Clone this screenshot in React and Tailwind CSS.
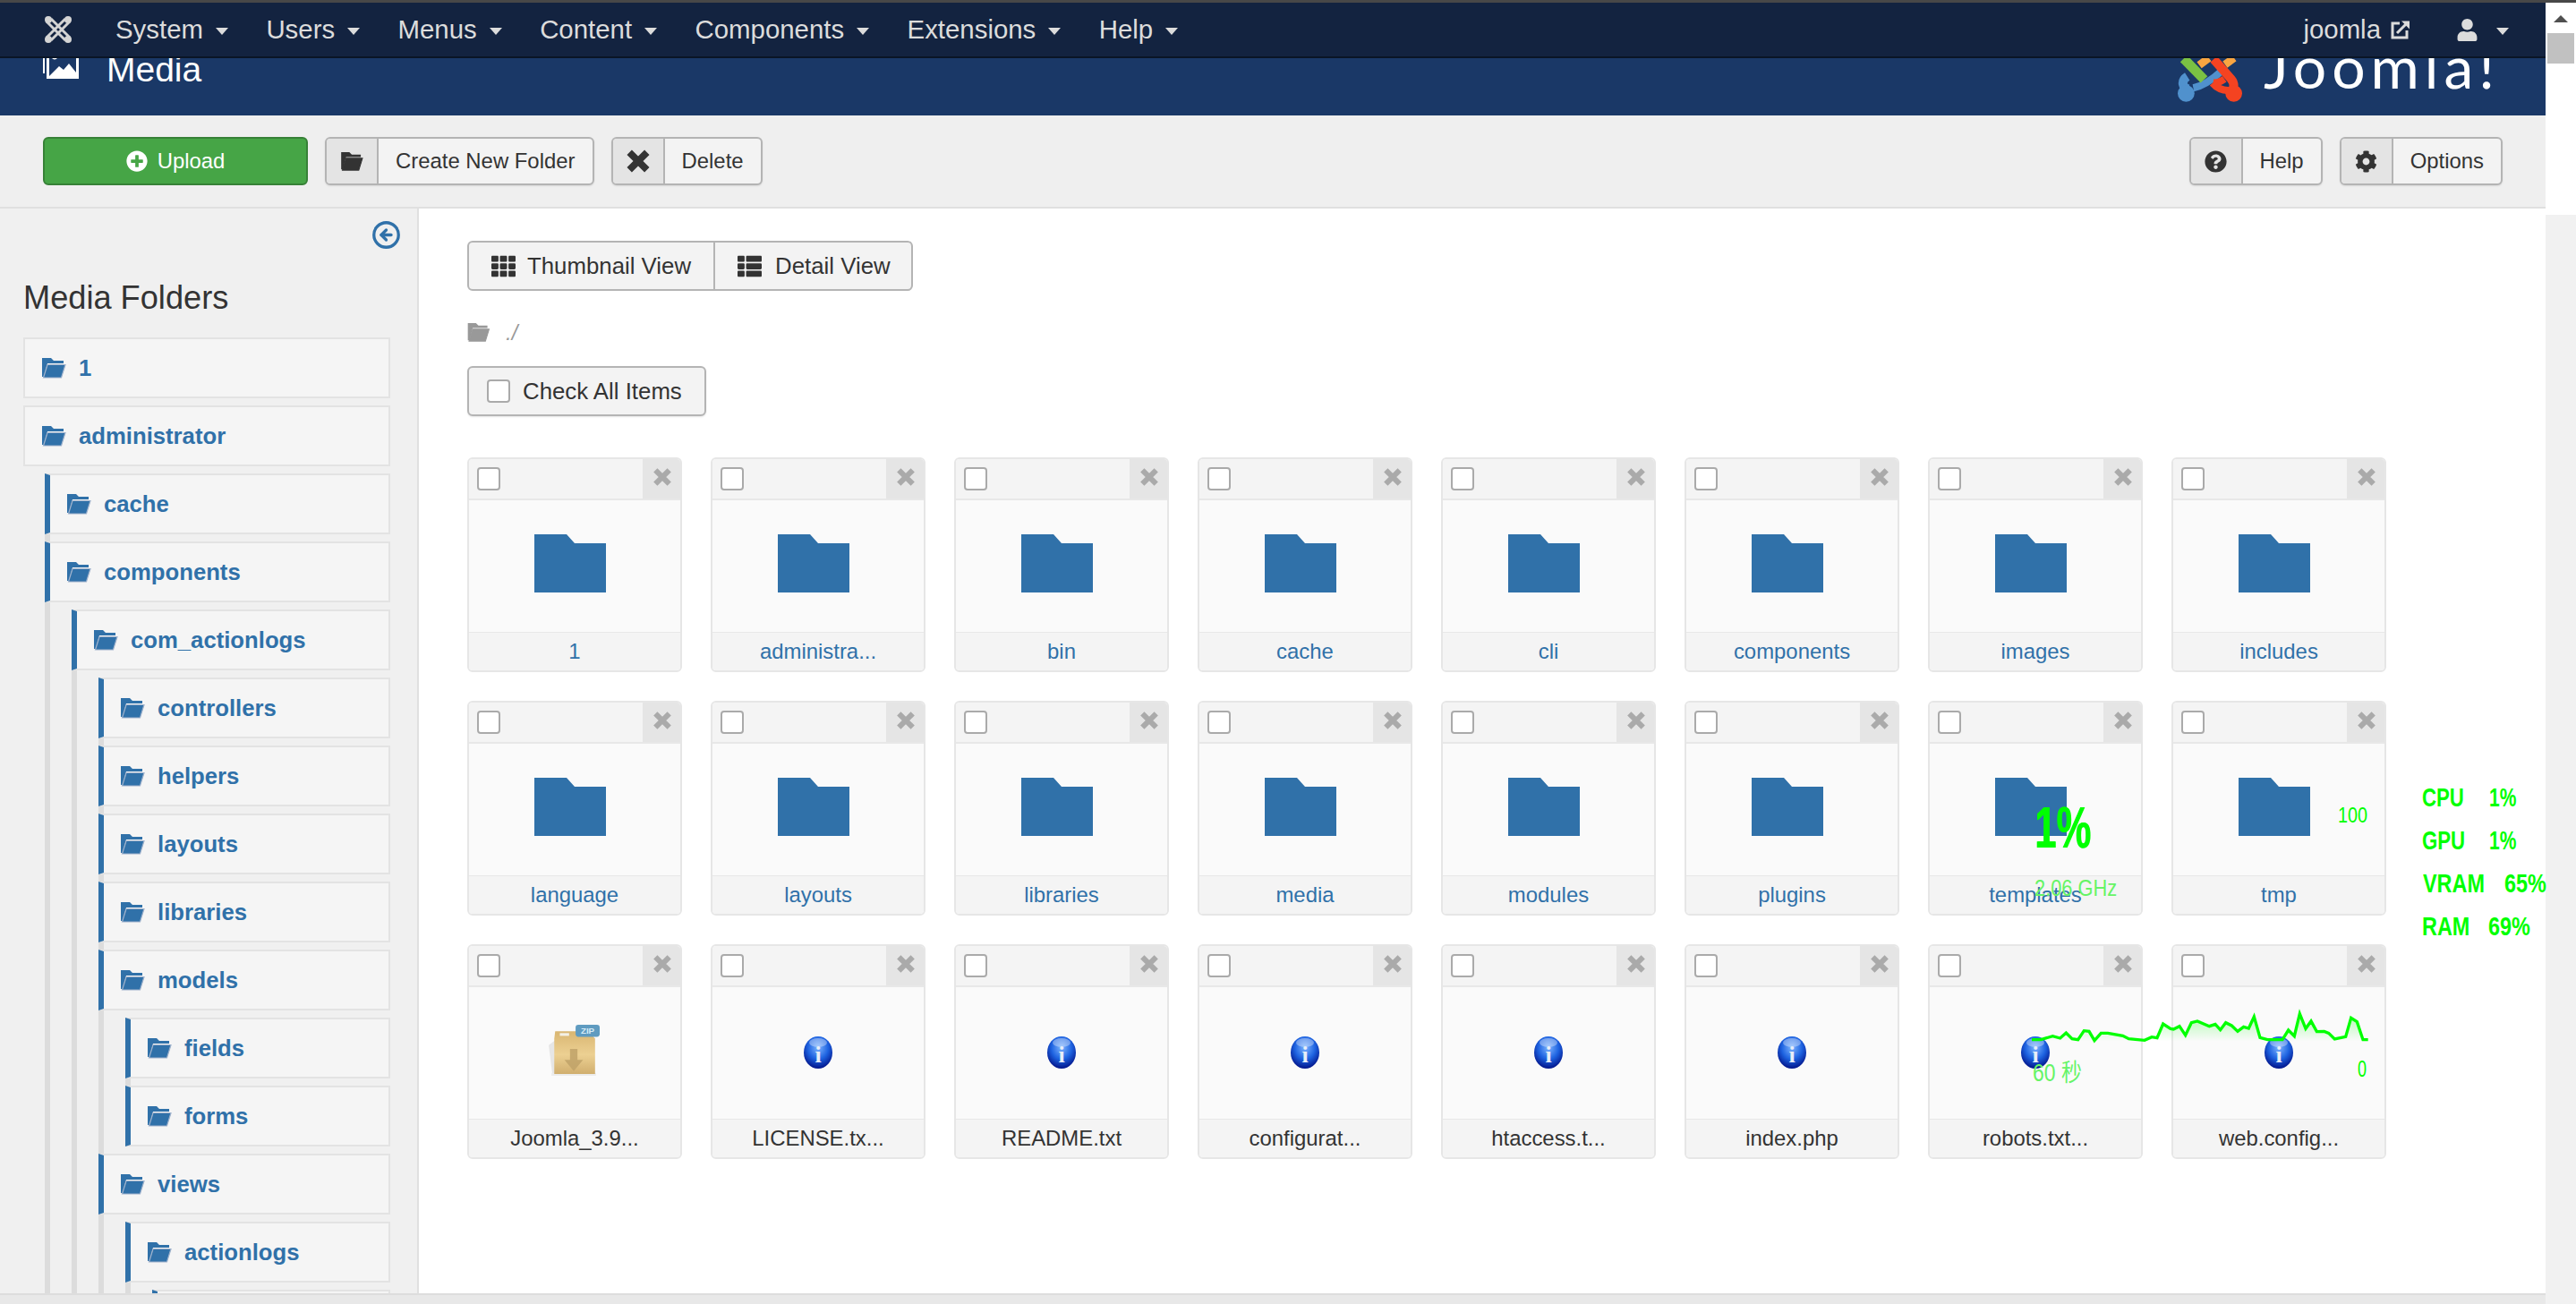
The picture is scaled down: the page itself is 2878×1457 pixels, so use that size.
import React from 'react';
import { FaCog, FaPlusCircle, FaQuestionCircle, FaTh, FaThList, FaUser } from 'react-icons/fa';
import { CircleArrowLeft } from 'lucide-react';

const navItems = ['System', 'Users', 'Menus', 'Content', 'Components', 'Extensions', 'Help'];

const tree = [
  { name: '1' },
  {
    name: 'administrator',
    children: [
      { name: 'cache' },
      {
        name: 'components',
        children: [
          {
            name: 'com_actionlogs',
            children: [
              { name: 'controllers' },
              { name: 'helpers' },
              { name: 'layouts' },
              { name: 'libraries' },
              {
                name: 'models',
                children: [{ name: 'fields' }, { name: 'forms' }],
              },
              {
                name: 'views',
                children: [{ name: 'actionlogs', children: [{ name: 'tmpl' }] }],
              },
            ],
          },
        ],
      },
    ],
  },
];

const folders = [
  '1', 'administra...', 'bin', 'cache', 'cli', 'components', 'images', 'includes',
  'language', 'layouts', 'libraries', 'media', 'modules', 'plugins', 'templates', 'tmp',
];

const files = ['LICENSE.tx...', 'README.txt', 'configurat...', 'htaccess.t...', 'index.php', 'robots.txt...', 'web.config...'];

const graphLine =
  '30,125 60,125 100,113 125,120 145,102 165,122 185,125 205,95 222,97 240,128 262,103 285,103 335,112 355,122 385,125 408,127 432,116 450,119 470,72 495,88 505,90 525,80 545,110 565,68 585,63 625,80 645,73 662,92 680,68 700,78 720,97 740,82 757,87 775,48 795,118 820,125 870,125 890,93 910,113 928,38 948,88 966,63 985,98 1010,97 1025,103 1045,123 1082,115 1100,52 1120,65 1140,125 1157,125';

// 打開的資料夾圖示
const FolderOpen = ({ color = '#3071a9', edge = '#9fb2cc', className = 'w-[27px] h-[23px]' }) => (
  <svg viewBox="0 0 27 23" className={className}>
    <path d="M0 0h10l3 3h11v3H6L2 21H0z" fill={color} />
    <path d="M6 7.5h20L21.5 22H1.5z" fill={color} stroke={edge} strokeWidth="1.2" />
  </svg>
);

const Cross = ({ className, color, width }) => (
  <svg viewBox="0 0 20 20" className={className}>
    <path d="M3 3l14 14M17 3L3 17" stroke={color} strokeWidth={width} fill="none" />
  </svg>
);

const TreeList = ({ items, level }) => (
  <ul className={level === 0 ? 'flex flex-col gap-2' : level === 1 ? 'flex flex-col gap-2 mt-2 ml-[24px] border-l-[6px] border-[#dcdcdc]' : 'flex flex-col gap-2 mt-2 ml-[30px] border-l-[6px] border-[#dcdcdc]'}>
    {items.map(item => (
      <li key={item.name} className={level === 0 ? '' : '-ml-[6px]'}>
        <div className={`h-[68px] flex items-center bg-[#f5f5f5] border-2 border-[#e3e3e3] pr-4 ${level === 0 ? 'pl-[19px]' : 'pl-[19px] border-l-[6px] border-l-[#3071a9]'}`}>
          <FolderOpen />
          <span className="ml-[14px] text-[25.7px] font-bold text-[#3071a9] whitespace-nowrap">{item.name}</span>
        </div>
        {item.children && <TreeList items={item.children} level={level + 1} />}
      </li>
    ))}
  </ul>
);

const ToolButton = ({ icon, label }) => (
  <button className="h-[54px] flex items-stretch bg-[#f3f3f3] border-2 border-[#b4b4b4] rounded-[6px] text-[#333] text-[23.9px] shadow-[0_1px_2px_rgba(0,0,0,0.1)]">
    <span className="w-[58px] flex items-center justify-center bg-[#e4e4e4] border-r-2 border-[#b4b4b4] rounded-l-[4px]">{icon}</span>
    <span className="px-[19px] flex items-center whitespace-nowrap">{label}</span>
  </button>
);

const Checkbox = ({ className = '' }) => (
  <span className={`block w-[26px] h-[26px] bg-white border-2 border-[#aaa] rounded-[4px] ${className}`}></span>
);

const InfoIcon = ({ id }) => (
  <svg viewBox="0 0 32 36" className="w-[32px] h-[36px] -mt-[2px]">
    <defs>
      <radialGradient id={id} cx="50%" cy="35%" r="65%">
        <stop offset="0%" stopColor="#7db4ff" />
        <stop offset="55%" stopColor="#1d62e0" />
        <stop offset="100%" stopColor="#02148a" />
      </radialGradient>
    </defs>
    <ellipse cx="16" cy="18" rx="16" ry="18" fill={`url(#${id})`} />
    <ellipse cx="16" cy="7" rx="10" ry="5" fill="#ffffff" opacity="0.35" />
    <text x="16" y="29" textAnchor="middle" fontSize="26" fontWeight="700" fontFamily="'Liberation Serif', serif" fill="#e8eef8">i</text>
  </svg>
);

const ZipIcon = () => (
  <svg viewBox="0 0 56 56" className="w-[58px] h-[58px] -mt-[5px] -ml-[2px]">
    <defs>
      <linearGradient id="zipBox" x1="0" y1="0" x2="0" y2="1">
        <stop offset="0%" stopColor="#d9b672" />
        <stop offset="55%" stopColor="#ecd092" />
        <stop offset="100%" stopColor="#d0ae6e" />
      </linearGradient>
    </defs>
    <path d="M1 22l8-6v38H5z" fill="#e6e6e6" />
    <rect x="4" y="52" width="48" height="3" fill="#ececec" />
    <path d="M8 7h36l7 8v38H7V15z" fill="url(#zipBox)" />
    <rect x="13" y="9" width="10" height="3" fill="#f3f0e6" />
    <path d="M24 26h8v12h6L28 50 18 38h6z" fill="#bfa268" opacity="0.85" />
    <rect x="30" y="0" width="26" height="13" rx="3" fill="#5f9bc0" />
    <text x="43" y="10" textAnchor="middle" fontSize="9.5" fontWeight="700" fontFamily="'Liberation Sans', sans-serif" fill="#d5eaf5">ZIP</text>
  </svg>
);

const Card = ({ label, isLink, children }) => (
  <div className="w-[240px] h-[240px] flex flex-col border-2 border-[#e6e6e6] rounded-[6px] overflow-hidden">
    <div className="h-[44px] flex items-center justify-between bg-[#f4f4f4] border-b-2 border-[#e8e8e8] shrink-0 box-content">
      <Checkbox className="ml-[9px] -mt-[1px]" />
      <div className="w-[42px] h-full bg-[#e5e5e5] flex items-center justify-center">
        <Cross className="w-[22px] h-[22px] -mt-[5px] ml-[2px]" color="#aaaaaa" width="5.5" />
      </div>
    </div>
    <div className="flex-1 bg-[#fafafa] border-b-2 border-[#e8e8e8] flex items-center justify-center">{children}</div>
    <div className={`h-[42px] shrink-0 bg-[#f4f4f4] flex items-center justify-center text-[23.9px] -mt-[1px] ${isLink ? 'text-[#3071a9]' : 'text-[#333]'}`}>{label}</div>
  </div>
);

const BigFolder = () => (
  <svg viewBox="0 0 80 65" className="w-[80px] h-[65px] -ml-[10px] -mt-[7px]">
    <path d="M0 0h36l9 10h35v55H0z" fill="#3071a9" />
  </svg>
);

const JoomlaMark = () => (
  <svg viewBox="0 0 34 32" className="w-[34px] h-[32px]" fill="#d4d4d4">
    <path d="M9 4l18 18M4 7l17 17M25 4L7 22M30 7L13 24M9 28l18-18M4 25l17-17M25 28L7 10M30 25L13 8" fill="none" stroke="#d4d4d4" strokeWidth="3" />
    <circle cx="6" cy="5" r="4" />
    <circle cx="28" cy="5" r="4" />
    <circle cx="6" cy="27" r="4" />
    <circle cx="28" cy="27" r="4" />
  </svg>
);

const JoomlaLogo = () => (
  <svg viewBox="40 -10 218 185" className="w-[73px] h-[62px]" fill="none">
    <path d="M112 52l32-24M198 50l30-22" stroke="#f9a541" strokeWidth="26" />
    <path d="M78 132C54 130 50 104 72 90" stroke="#5091cd" strokeWidth="30" />
    <path d="M92 128c30-6 68-32 94-56" stroke="#5091cd" strokeWidth="24" />
    <circle cx="68" cy="146" r="28" fill="#5091cd" />
    <path d="M60 30l68 70" stroke="#7ac143" strokeWidth="32" />
    <path d="M160 32l58 66c10 12 10 26 6 36" stroke="#f44321" strokeWidth="30" />
    <path d="M196 98c-14 10-28 14-38 12" stroke="#f44321" strokeWidth="24" />
    <path d="M156 112c14 16 36 26 60 24" stroke="#f44321" strokeWidth="24" />
    <circle cx="227" cy="146" r="28" fill="#f44321" />
  </svg>
);

export default function App() {
  return (
    <div className="relative w-full h-screen flex flex-col overflow-hidden bg-white font-['Liberation_Sans',Arial,sans-serif] text-[#333]">
      <div className="h-[3px] bg-[#484848] shrink-0"></div>
      <div className="flex-1 min-h-0 flex">
        <div className="flex-1 min-w-0 flex flex-col">
          {/* 上方導覽列 */}
          <nav className="h-[62px] shrink-0 flex items-center pl-[48px] pr-[41px] bg-[#132340] border-b-2 border-[#0a1526] text-[29.4px] text-[#dcdcdc]">
            <JoomlaMark />
            <div className="ml-[47px] flex items-center gap-[42.4px]">
              {navItems.map(item => (
                <span key={item} className="flex items-center gap-[14px]">
                  {item}
                  <span className="w-0 h-0 border-x-[7.5px] border-x-transparent border-t-[8px] border-t-[#dcdcdc] mt-[4px]"></span>
                </span>
              ))}
            </div>
            <span className="ml-auto">joomla</span>
            <svg viewBox="0 0 22 22" className="ml-[11px] w-[22px] h-[22px]" fill="none" stroke="#dcdcdc" strokeWidth="3">
              <path d="M10 4H2v16h16v-8" />
              <path d="M7 15L19 3" />
              <path d="M12 1.5h9v9z" fill="#dcdcdc" stroke="none" />
            </svg>
            <FaUser className="ml-[51px] w-[25px] h-[25px] text-[#dcdcdc]" />
            <span className="ml-[20px] w-0 h-0 border-x-[7.5px] border-x-transparent border-t-[8px] border-t-[#dcdcdc] mt-[4px]"></span>
          </nav>

          {/* 標題列，上緣被導覽列蓋住 */}
          <header className="h-[64px] shrink-0 overflow-hidden flex items-start pl-[48px] pr-[51px] bg-[#1a3867] text-white">
            <svg viewBox="0 0 40 34" className="w-[40px] h-[34px] -mt-[11px]">
              <rect x="0" y="0" width="2" height="28" fill="#fff" />
              <rect x="4" y="0" width="36" height="34" fill="#fff" />
              <path d="M7 3h30v24l-8-10-6 7-5-4-11 11z" fill="#1a3867" />
              <circle cx="13" cy="9" r="3.4" fill="#fff" />
            </svg>
            <span className="ml-[31px] -mt-[7px] text-[39px] leading-[40px]">Media</span>
            <div className="ml-auto flex items-start">
              <div className="-mt-[13px]"><JoomlaLogo /></div>
              <span className="ml-[23px] -mt-[41px] text-[66px] leading-[100px] font-normal font-['Lato',sans-serif] tracking-[6px]">Joomla!</span>
            </div>
          </header>

          {/* 工具列 */}
          <div className="h-[104px] shrink-0 flex items-start gap-[19px] pt-[24px] px-[48px] bg-[#efefef] border-b-2 border-[#e0e0e0]">
            <button className="w-[296px] h-[54px] flex items-center justify-center gap-[11px] bg-[#46a546] border-2 border-[#378137] rounded-[6px] text-white text-[23.9px]">
              <FaPlusCircle className="w-[24px] h-[24px]" />
              Upload
            </button>
            <ToolButton icon={<FolderOpen color="#333" edge="#333" className="w-[25px] h-[21px]" />} label="Create New Folder" />
            <ToolButton icon={<Cross className="w-[28px] h-[28px]" color="#333" width="5.5" />} label="Delete" />
            <div className="ml-auto flex gap-[19px]">
              <ToolButton icon={<FaQuestionCircle className="w-[25px] h-[25px] text-[#333]" />} label="Help" />
              <ToolButton icon={<FaCog className="w-[25px] h-[25px] text-[#333]" />} label="Options" />
            </div>
          </div>

          <div className="flex-1 min-h-0 flex">
            {/* 側欄資料夾樹 */}
            <aside className="w-[468px] shrink-0 bg-[#f0f0f0] border-r-2 border-[#e0e0e0] overflow-hidden pl-[26px] pr-[30px] pt-[13px]">
              <div className="flex justify-end -mr-[12px]">
                <CircleArrowLeft className="w-[33px] h-[33px] text-[#3071a9]" strokeWidth={2.4} />
              </div>
              <h3 className="mt-[34px] text-[36.2px] leading-[40px] text-[#333]">Media Folders</h3>
              <div className="mt-[24px]">
                <TreeList items={tree} level={0} />
              </div>
            </aside>

            {/* 主要內容 */}
            <main className="flex-1 min-w-0 pl-[54px] pt-[36px]">
              <div className="inline-flex h-[56px] bg-[#f3f3f3] border-2 border-[#b4b4b4] rounded-[6px] text-[25.8px] text-[#333]">
                <span className="flex items-center gap-[13px] pl-[25px] pr-[25px] border-r-2 border-[#b4b4b4]">
                  <FaTh className="w-[27px] h-[27px]" />
                  Thumbnail View
                </span>
                <span className="flex items-center gap-[15px] pl-[25px] pr-[23px]">
                  <FaThList className="w-[27px] h-[27px]" />
                  Detail View
                </span>
              </div>
              <div className="mt-[36px] h-[21px] flex items-center gap-[17px] text-[#999] text-[23.9px]">
                <FolderOpen color="#999" edge="#999" className="w-[26px] h-[21px]" />
                <span className="italic">./</span>
              </div>
              <div className="mt-[27px]">
                <div className="inline-flex items-center gap-[14px] h-[56px] pl-[20px] pr-[25px] bg-[#f3f3f3] border-2 border-[#b4b4b4] rounded-[6px] text-[25.8px] shadow-[0_1px_2px_rgba(0,0,0,0.1)]">
                  <Checkbox className="border-[#777]" />
                  Check All Items
                </div>
              </div>
              <div className="mt-[46px] grid grid-cols-[repeat(8,240px)] gap-[32px]">
                {folders.map(name => (
                  <Card key={name} label={name} isLink><BigFolder /></Card>
                ))}
                <Card label="Joomla_3.9..."><ZipIcon /></Card>
                {files.map((name, i) => (
                  <Card key={name} label={name}><InfoIcon id={`info${i}`} /></Card>
                ))}
              </div>
            </main>
          </div>
          <div className="h-[12px] shrink-0 bg-[#e8e8e8] border-t-2 border-[#dddddd]"></div>
        </div>

        {/* 捲軸 */}
        <div className="w-[34px] shrink-0 flex flex-col">
          <div className="h-[237px] bg-white flex flex-col items-center">
            <span className="mt-[14px] w-0 h-0 border-x-[8px] border-x-transparent border-b-[8px] border-b-[#505050]"></span>
            <div className="mt-[12px] w-[30px] h-[34px] bg-[#c1c1c1]"></div>
          </div>
          <div className="flex-1 bg-[#f1f1f1]"></div>
        </div>
      </div>

      {/* 硬體監控的綠色浮層 */}
      <div className="absolute inset-0 pointer-events-none font-['Liberation_Sans',sans-serif] text-[#00ff00] font-bold">
        <span className="absolute left-[2273px] top-[893px] origin-left scale-x-[0.68] text-[64px] leading-[64px] [text-shadow:1px_0_0_#00ff00]">1%</span>
        <span className="absolute left-[2273px] top-[978px] origin-left scale-x-[0.84] text-[26px] leading-[28px] font-normal text-[#66f466]">2.06 GHz</span>
        <span className="absolute left-[2612px] top-[898px] origin-left scale-x-[0.86] text-[23px] leading-[26px] font-normal">100</span>
        <span className="absolute left-[2706px] top-[875px] origin-left scale-x-[0.74] text-[30px] leading-[32px]">CPU</span>
        <span className="absolute left-[2781px] top-[875px] origin-left scale-x-[0.7] text-[30px] leading-[32px]">1%</span>
        <span className="absolute left-[2706px] top-[923px] origin-left scale-x-[0.74] text-[30px] leading-[32px]">GPU</span>
        <span className="absolute left-[2781px] top-[923px] origin-left scale-x-[0.7] text-[30px] leading-[32px]">1%</span>
        <span className="absolute left-[2707px] top-[971px] origin-left scale-x-[0.78] text-[30px] leading-[32px]">VRAM</span>
        <span className="absolute left-[2798px] top-[971px] origin-left scale-x-[0.78] text-[30px] leading-[32px]">65%</span>
        <span className="absolute left-[2706px] top-[1019px] origin-left scale-x-[0.78] text-[30px] leading-[32px]">RAM</span>
        <span className="absolute left-[2780px] top-[1019px] origin-left scale-x-[0.78] text-[30px] leading-[32px]">69%</span>
        <span className="absolute left-[2271px] top-[1184px] origin-left scale-x-[0.85] text-[27px] leading-[30px] font-normal text-[#66f466] font-['Liberation_Sans','Noto_Sans_CJK_SC',sans-serif]">60 秒</span>
        <span className="absolute left-[2634px] top-[1180px] origin-left scale-x-[0.72] text-[25px] leading-[28px] font-normal">0</span>
        <svg viewBox="0 0 1200 300" className="absolute left-[2260px] top-[1120px] w-[400px] h-[100px]">
          <defs>
            <linearGradient id="graphFill" x1="0" y1="0" x2="0" y2="1">
              <stop offset="0%" stopColor="#00ff00" stopOpacity="0.3" />
              <stop offset="100%" stopColor="#00ff00" stopOpacity="0" />
            </linearGradient>
          </defs>
          <polygon points={`30,130 ${graphLine} 1157,130`} fill="url(#graphFill)" />
          <polyline points={graphLine} fill="none" stroke="#00ff00" strokeWidth="10" />
        </svg>
      </div>
    </div>
  );
}
